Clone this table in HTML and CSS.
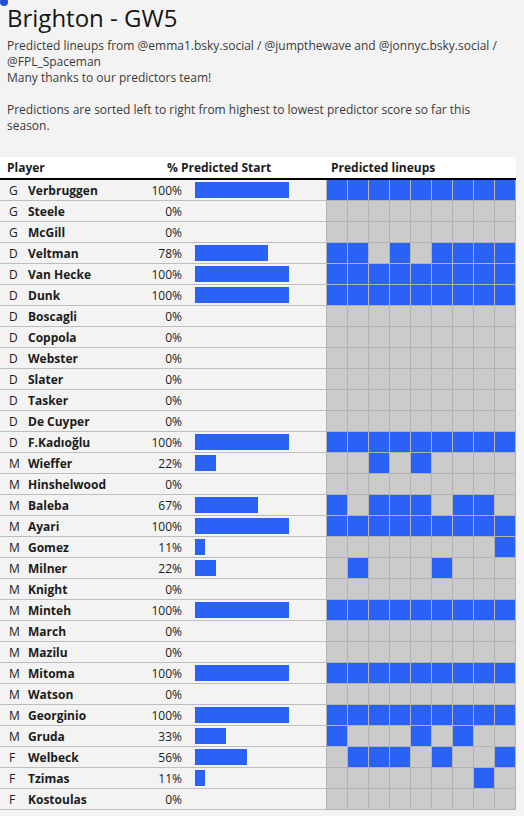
FILE: index.html
```html
<!DOCTYPE html>
<html>
<head>
<meta charset="utf-8">
<link rel="stylesheet" href="styles.css">
</head>
<body>
<div class="dot"></div>
<div class="page">
  <h1 class="title">Brighton - GW5</h1>
  <p class="desc">Predicted lineups from @emma1.bsky.social / @jumpthewave and @jonnyc.bsky.social / @FPL_Spaceman<br>Many thanks to our predictors team!<br><br>Predictions are sorted left to right from highest to lowest predictor score so far this season.</p>
</div>
<div class="table" id="table">
  <div class="thead">
    <div class="h-player">Player</div>
    <div class="h-pct">% Predicted Start</div>
    <div class="h-lineups">Predicted lineups</div>
  </div>
</div>
<script src="app.js"></script>
</body>
</html>
```
FILE: styles.css
```css
html, body {
  margin: 0;
  padding: 0;
  background: #f3f3f3;
  font-family: "Open Sans", "Liberation Sans", sans-serif;
  color: #1b1b1b;
}
.dot {
  position: absolute;
  left: 0;
  top: -2px;
  width: 8px;
  height: 8px;
  border-radius: 50%;
  background: #1d4fd8;
}
.page {
  padding: 0 7px;
}
.title {
  margin: 0;
  padding-top: 3px;
  font-size: 24px;
  line-height: 30px;
  font-weight: 400;
  color: #151515;
}
.desc {
  margin: 5px 0 0 0;
  font-size: 12px;
  line-height: 16px;
  color: #3a3a3a;
  width: 500px;
}
.table {
  margin-top: 23px;
  width: 516px;
  font-size: 12px;
}
.thead {
  display: flex;
  align-items: center;
  height: 21px;
  background: #fff;
  border-bottom: 2px solid #000;
  font-weight: 700;
}
.h-player { width: 160px; padding-left: 7px; }
.h-pct { width: 159px; }
.h-lineups { padding-left: 5px; }
.row {
  display: flex;
}
.info {
  width: 326px;
  height: 20px;
  border-bottom: 1px solid #bdbdbd;
  display: flex;
  align-items: center;
}
.pos { width: 19px; padding-left: 9px; }
.name { width: 112px; font-weight: 700; white-space: nowrap; }
.pct { width: 42px; text-align: right; }
.barcell { padding-left: 13px; display: flex; align-items: center; }
.bar { height: 16px; background: #2a62f5; }
.lineup {
  display: flex;
  border-left: 1px solid #b3b3b3;
}
.cell {
  width: 20px;
  height: 20px;
  border-right: 1px solid #b3b3b3;
  border-bottom: 1px solid #b3b3b3;
  background: #cbcbcb;
}
.cell.on { background: #2a62f5; }
```
FILE: app.js
```js
const players = [
  ["G","Verbruggen","111111111"],
  ["G","Steele","000000000"],
  ["G","McGill","000000000"],
  ["D","Veltman","110101111"],
  ["D","Van Hecke","111111111"],
  ["D","Dunk","111111111"],
  ["D","Boscagli","000000000"],
  ["D","Coppola","000000000"],
  ["D","Webster","000000000"],
  ["D","Slater","000000000"],
  ["D","Tasker","000000000"],
  ["D","De Cuyper","000000000"],
  ["D","F.Kadıoğlu","111111111"],
  ["M","Wieffer","001010000"],
  ["M","Hinshelwood","000000000"],
  ["M","Baleba","101110110"],
  ["M","Ayari","111111111"],
  ["M","Gomez","000000001"],
  ["M","Milner","010001000"],
  ["M","Knight","000000000"],
  ["M","Minteh","111111111"],
  ["M","March","000000000"],
  ["M","Mazilu","000000000"],
  ["M","Mitoma","111111111"],
  ["M","Watson","000000000"],
  ["M","Georginio","111111111"],
  ["M","Gruda","100010100"],
  ["F","Welbeck","011101001"],
  ["F","Tzimas","000000010"],
  ["F","Kostoulas","000000000"]
];
const table = document.getElementById("table");
for (const [pos, name, pattern] of players) {
  const count = pattern.split("").filter(c => c === "1").length;
  const pct = Math.round(count / 9 * 100);
  const row = document.createElement("div");
  row.className = "row";
  const info = document.createElement("div");
  info.className = "info";
  info.innerHTML = `<div class="pos">${pos}</div><div class="name">${name}</div><div class="pct">${pct}%</div><div class="barcell">${count ? `<div class="bar" style="width:${(count / 9 * 94).toFixed(1)}px"></div>` : ""}</div>`;
  row.appendChild(info);
  const lineup = document.createElement("div");
  lineup.className = "lineup";
  for (const c of pattern) {
    const cell = document.createElement("div");
    cell.className = "cell" + (c === "1" ? " on" : "");
    lineup.appendChild(cell);
  }
  row.appendChild(lineup);
  table.appendChild(row);
}
```
